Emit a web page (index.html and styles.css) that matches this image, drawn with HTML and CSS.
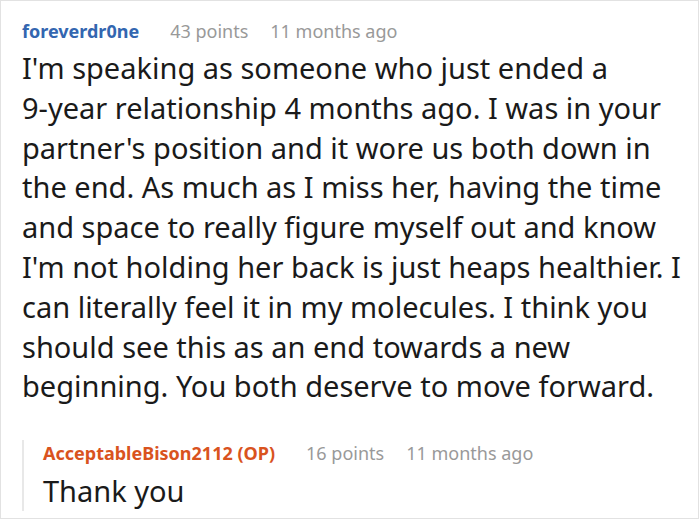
FILE: index.html
```html
<!DOCTYPE html>
<html>
<head>
<meta charset="utf-8">
<link rel="stylesheet" href="styles.css">
</head>
<body>
<div class="frame">
  <div class="comment">
    <div class="meta">
      <span class="author">foreverdr0ne</span>
      <span class="info">43 points</span>
      <span class="info">11 months ago</span>
    </div>
    <p class="text">I'm speaking as someone who just ended a <span class="nowrap">9-year</span> relationship 4 months ago. I was in your partner's position and it wore us both down in the end. As much as I miss her, having the time and space to really figure myself out and know I'm not holding her back is just heaps healthier. I can literally feel it in my molecules. I think you should see this as an end towards a new beginning. You both deserve to move forward.</p>
    <div class="reply">
      <div class="meta">
        <span class="author op">AcceptableBison2112 (OP)</span>
        <span class="info">16 points</span>
        <span class="info">11 months ago</span>
      </div>
      <p class="text reply-text">Thank you</p>
    </div>
  </div>
</div>
</body>
</html>
```
FILE: styles.css
```css
html, body {
  margin: 0;
  padding: 0;
  background: #fff;
}
body {
  font-family: "Noto Sans", "DejaVu Sans", sans-serif;
}
.frame {
  width: 699px;
  height: 519px;
  box-sizing: border-box;
  border: 1px solid #e2e2e2;
  overflow: hidden;
}
.comment {
  padding: 17px 0 0 21px;
}
.meta {
  display: flex;
  align-items: baseline;
  gap: 22px;
  font-size: 18px;
  line-height: 26px;
}
.author {
  font-weight: bold;
  color: #3366b0;
  margin-right: 9px;
}
.author.op {
  color: #d9531e;
}
.info {
  color: #999;
}
.text {
  margin: 4px 0 0 0;
  font-size: 29px;
  line-height: 39.8px;
  color: #1a1a1a;
  width: 674px;
}
.nowrap {
  white-space: nowrap;
}
.reply {
  margin-top: 34px;
  border-left: 2px solid #e8e8e8;
  padding-left: 19px;
}
.reply-text {
  margin-top: 5px;
  line-height: 40px;
}
```
